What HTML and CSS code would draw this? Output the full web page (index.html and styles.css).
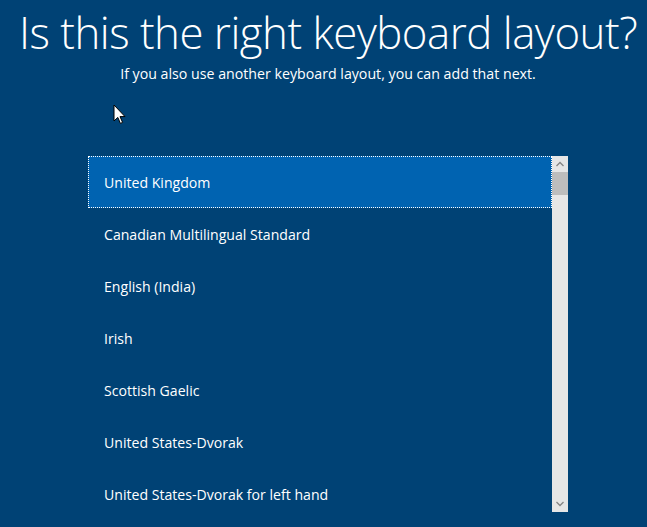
FILE: index.html
```html
<!DOCTYPE html>
<html>
<head>
<meta charset="utf-8">
<link rel="stylesheet" href="styles.css">
</head>
<body>
<div class="page">
  <h1 class="title">Is this the right keyboard layout?</h1>
  <p class="subtitle">If you also use another keyboard layout, you can add that next.</p>
  <div class="listbox">
    <ul class="items">
      <li class="item selected">United Kingdom</li>
      <li class="item">Canadian Multilingual Standard</li>
      <li class="item">English (India)</li>
      <li class="item">Irish</li>
      <li class="item">Scottish Gaelic</li>
      <li class="item">United States-Dvorak</li>
      <li class="item">United States-Dvorak for left hand</li>
    </ul>
    <div class="scrollbar">
      <div class="arrow">
        <svg width="16" height="16" viewBox="0 0 16 16"><path d="M4.5 10 L8 6.5 L11.5 10" fill="none" stroke="#858585" stroke-width="1.3"/></svg>
      </div>
      <div class="thumb"></div>
      <div class="track"></div>
      <div class="arrow">
        <svg width="16" height="16" viewBox="0 0 16 16"><path d="M4.5 6 L8 9.5 L11.5 6" fill="none" stroke="#858585" stroke-width="1.3"/></svg>
      </div>
    </div>
  </div>
  <svg class="cursor" width="14" height="22" viewBox="0 0 14 22">
    <path d="M1 1 L1 17 L4.8 13.4 L7.4 19.4 L9.6 18.4 L7 12.6 L12 12.6 Z" fill="#fff" stroke="#000" stroke-width="1"/>
  </svg>
</div>
</body>
</html>
```
FILE: styles.css
```css
html, body {
  margin: 0;
  padding: 0;
  background: #004275;
}
.page {
  position: relative;
  width: 647px;
  height: 527px;
  overflow: hidden;
  font-family: "Open Sans", "Noto Sans", sans-serif;
  color: #fff;
}
.title {
  margin: 0;
  padding: 4px 0 0 9px;
  height: 56px;
  text-align: center;
  font-weight: 300;
  font-size: 43.8px;
  line-height: 56px;
  letter-spacing: -0.5px;
  white-space: nowrap;
}
.subtitle {
  margin: 4px 0 0 0;
  padding-left: 9px;
  text-align: center;
  font-size: 14.2px;
  line-height: 20px;
}
.listbox {
  margin: 72px 0 0 88px;
  width: 480px;
  height: 356px;
  display: flex;
  overflow: hidden;
}
.items {
  list-style: none;
  margin: 0;
  padding: 0;
  flex: 1;
}
.item {
  height: 52px;
  box-sizing: border-box;
  padding-left: 16px;
  display: flex;
  align-items: center;
  font-size: 14.1px;
}
.item.selected {
  background: #0063b1;
  outline: 1px dotted #fff;
  outline-offset: -1px;
}
.scrollbar {
  width: 16px;
  height: 356px;
  background: #e6e6e6;
  display: flex;
  flex-direction: column;
}
.arrow {
  height: 16px;
  display: flex;
  justify-content: center;
  align-items: center;
}
.thumb {
  height: 23px;
  background: #bdbdbd;
}
.track {
  flex: 1;
}
.cursor {
  position: absolute;
  left: 113px;
  top: 104px;
}
```
